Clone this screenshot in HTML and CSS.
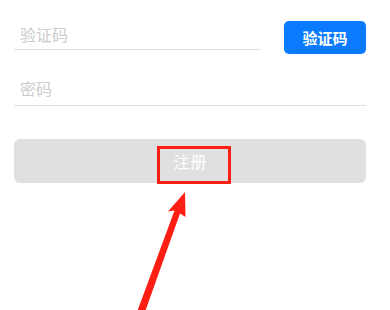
FILE: index.html
```html
<!DOCTYPE html>
<html lang="zh">
<head>
<meta charset="utf-8">
<link rel="stylesheet" href="styles.css">
</head>
<body>
<div class="page">
  <div class="row">
    <div class="field grow"><span class="ph">验证码</span></div>
    <button class="code-btn">验证码</button>
  </div>
  <div class="field pwd"><span class="ph">密码</span></div>
  <div class="register">
    <span class="reg-text">注册</span>
    <div class="highlight"></div>
  </div>
</div>
<svg class="arrow" width="390" height="310" viewBox="0 0 390 310">
  <polygon points="185,192 185.5,217 180,213.5 145,312 137,312 174.5,210.5 168,211.5" fill="#fe1e14"/>
</svg>
</body>
</html>
```
FILE: styles.css
```css
html, body {
  margin: 0;
  padding: 0;
  background: #ffffff;
}
body {
  position: relative;
  width: 390px;
  height: 310px;
  overflow: hidden;
  font-family: "Noto Sans CJK SC", "Noto Sans", sans-serif;
}
.page {
  padding: 21px 24px 0 14px;
}
.row {
  display: flex;
  align-items: flex-start;
}
.grow {
  flex: 1;
}
.field {
  padding: 5px 0 7px 6px;
  font-size: 16px;
  line-height: 16px;
  border-bottom: 1px solid #e0e0e0;
}
.ph {
  color: #cbcbcb;
}
.pwd {
  margin-top: 21px;
  padding-bottom: 9px;
}
.code-btn {
  margin-left: 23px;
  width: 82px;
  height: 33px;
  border: none;
  border-radius: 5px;
  background: #0a7bff;
  color: #ffffff;
  font-family: "Noto Sans CJK SC", "Noto Sans", sans-serif;
  font-size: 15px;
  font-weight: bold;
  padding: 0;
}
.register {
  position: relative;
  margin-top: 33px;
  height: 44px;
  border-radius: 6px;
  background: #e0e0e0;
  display: flex;
  align-items: center;
  justify-content: center;
}
.reg-text {
  color: #ffffff;
  font-size: 16px;
  line-height: 16px;
  letter-spacing: 1px;
  margin-left: 1px;
}
.highlight {
  position: absolute;
  left: 143px;
  top: 7px;
  width: 68px;
  height: 32px;
  border: 3px solid #fe1e14;
}
.arrow {
  position: absolute;
  left: 0;
  top: 0;
}
```
